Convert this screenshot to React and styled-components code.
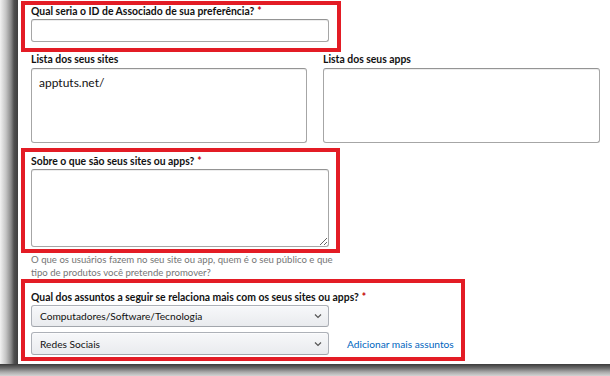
import React from 'react';
import styled, { createGlobalStyle } from 'styled-components';

const COLORS = {
  red: '#e31c25',
  text: '#111111',
  muted: '#767676',
  border: '#a6a6a6',
  link: '#0066c0',
  star: '#c40000',
};

const GlobalStyle = createGlobalStyle`
  * { box-sizing: border-box; }
  html, body { margin: 0; padding: 0; background: #d6d6d6; }
  body {
    font-family: Lato, "Liberation Sans", Arial, sans-serif;
    color: ${COLORS.text};
  }
`;

const Stage = styled.div`
  width: 610px;
  height: 376px;
  overflow: hidden;
  display: grid;
  grid-template-columns: 18px 1fr;
  grid-template-rows: 364px 12px;
`;

const SideShadow = styled.div`
  background: linear-gradient(
    to right,
    #f2f2f2 0,
    #c4c4c4 6px,
    #8a8a8a 11px,
    #505050 14px,
    #3e3e3e 18px
  );
`;

const BottomShadow = styled.div`
  grid-column: 1 / span 2;
  background: linear-gradient(
    to bottom,
    #3a3a3a 0,
    #6a6a6a 4px,
    #a8a8a8 8px,
    #d4d4d4 12px
  );
`;

const Panel = styled.div`
  background: #fff;
  padding-left: 13px;
  display: flex;
  flex-direction: column;
`;

const Highlight = styled.div`
  width: ${(p) => p.$width}px;
  margin-left: -10px;
  margin-top: ${(p) => p.$top || 0}px;
  border: 4px solid ${COLORS.red};
  padding: ${(p) => p.$padTop || 0}px 0 ${(p) => p.$padBottom || 0}px 6px;
  display: flex;
  flex-direction: column;
`;

const Label = styled.label`
  display: block;
  font-size: 10.4px;
  line-height: 13px;
  font-weight: 700;
  white-space: nowrap;
  margin-top: ${(p) => p.$top || 0}px;

  span {
    color: ${COLORS.star};
    font-weight: 700;
    margin-left: 3px;
  }
`;

const TextInput = styled.input`
  display: block;
  width: 298px;
  height: 23px;
  margin-top: 1px;
  border: 1px solid ${COLORS.border};
  border-top-color: #949494;
  border-radius: 3px;
  box-shadow: inset 0 1px 0 rgba(0, 0, 0, 0.07);
  padding: 0 7px;
  font: inherit;
  font-size: 11px;
  outline: none;
`;

const TextArea = styled.textarea`
  display: block;
  width: ${(p) => p.$width}px;
  height: ${(p) => p.$height}px;
  margin-top: ${(p) => p.$top || 0}px;
  border: 1px solid ${COLORS.border};
  border-top-color: #949494;
  border-radius: 3px;
  box-shadow: inset 0 1px 0 rgba(0, 0, 0, 0.07);
  padding: 7px 7px;
  font-family: inherit;
  font-size: 12px;
  line-height: 14px;
  color: ${COLORS.text};
  resize: ${(p) => (p.$resize ? 'both' : 'none')};
  outline: none;
`;

const Columns = styled.div`
  display: flex;
  gap: 16px;
`;

const Column = styled.div`
  display: flex;
  flex-direction: column;
`;

const Helper = styled.p`
  margin: 0;
  width: 320px;
  font-size: 9.6px;
  line-height: 13px;
  color: ${COLORS.muted};
`;

const SelectRow = styled.div`
  display: flex;
  align-items: center;
  gap: 18px;
  margin-top: ${(p) => p.$top || 0}px;
`;

const Select = styled.div`
  width: 298px;
  height: ${(p) => p.$height}px;
  display: flex;
  align-items: center;
  justify-content: space-between;
  padding: 0 6px 0 8px;
  background: linear-gradient(to bottom, #f7f8fa, #e9ebee);
  border: 1px solid #adb1b8;
  border-bottom-color: #a2a6ac;
  border-radius: 3px;
  box-shadow: inset 0 1px 0 rgba(255, 255, 255, 0.6);
  font-size: 10.2px;
  color: ${COLORS.text};
`;

const Chevron = () => (
  <svg width="8" height="6" viewBox="0 0 8 6" aria-hidden="true">
    <path d="M1 1.5 L4 4.5 L7 1.5" fill="none" stroke="#555" strokeWidth="1.2" />
  </svg>
);

const Link = styled.a`
  font-size: 10.2px;
  color: ${COLORS.link};
  text-decoration: none;
  white-space: nowrap;
`;

export default function App() {
  return (
    <>
      <GlobalStyle />
      <Stage>
        <SideShadow />
        <Panel>
          <Highlight $width={320} $top={1} $padTop={0} $padBottom={6}>
            <Label>
              Qual seria o ID de Associado de sua preferência?<span>*</span>
            </Label>
            <TextInput type="text" />
          </Highlight>

          <Columns>
            <Column>
              <Label $top={1}>Lista dos seus sites</Label>
              <TextArea $width={276} $height={75} $top={2} defaultValue="apptuts.net/" />
            </Column>
            <Column>
              <Label $top={1}>Lista dos seus apps</Label>
              <TextArea $width={277} $height={75} $top={2} />
            </Column>
          </Columns>

          <Highlight $width={319} $top={5} $padTop={3} $padBottom={2}>
            <Label>
              Sobre o que são seus sites ou apps?<span>*</span>
            </Label>
            <TextArea $width={298} $height={78} $top={1} $resize />
          </Highlight>

          <Helper>
            O que os usuários fazem no seu site ou app, quem é o seu público e que
            tipo de produtos você pretende promover?
          </Helper>

          <Highlight $width={444} $top={0} $padTop={8} $padBottom={2}>
            <Label>
              Qual dos assuntos a seguir se relaciona mais com os seus sites ou apps?
              <span>*</span>
            </Label>
            <SelectRow $top={1}>
              <Select $height={22}>
                Computadores/Software/Tecnologia
                <Chevron />
              </Select>
            </SelectRow>
            <SelectRow $top={5}>
              <Select $height={23}>
                Redes Sociais
                <Chevron />
              </Select>
              <Link href="#">Adicionar mais assuntos</Link>
            </SelectRow>
          </Highlight>
        </Panel>
        <BottomShadow />
      </Stage>
    </>
  );
}
